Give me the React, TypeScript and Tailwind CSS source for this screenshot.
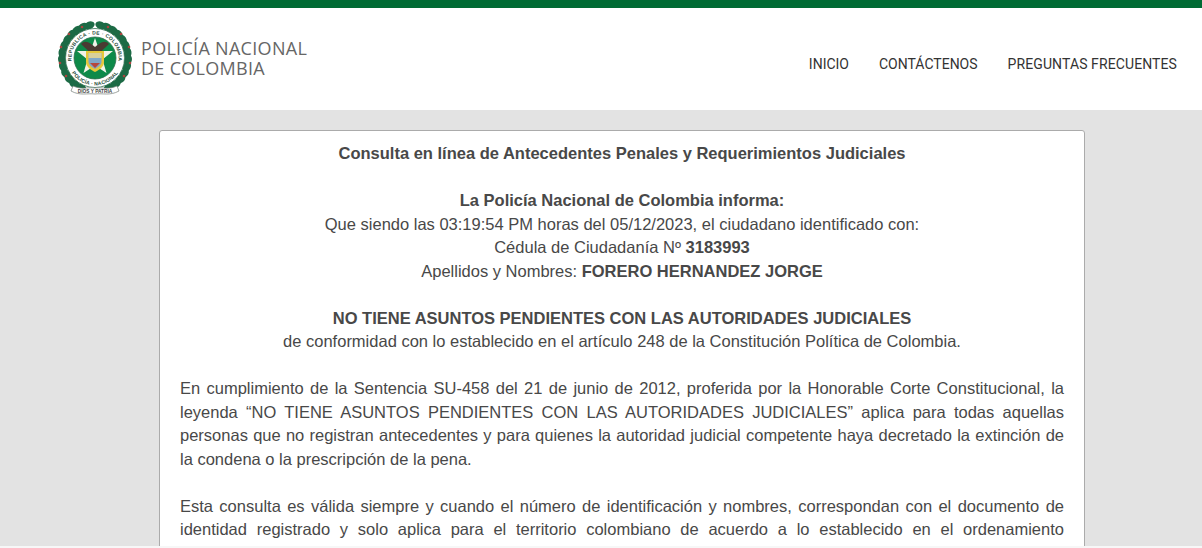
const leafAngles = [-80, -68, -56, -44, -32, -20, -8, 4, 16, 28, 40, 52, 64];

const Leaves = ({ side }: { side: 1 | -1 }) => (
  <g fill="#1c6a45">
    {leafAngles.map((a) => {
      const r = (a * Math.PI) / 180;
      const cx = 38 + side * 33 * Math.cos(r);
      const cy = 38 + 33 * Math.sin(r);
      return (
        <ellipse
          key={a}
          cx={cx}
          cy={cy}
          rx="3.8"
          ry="5.6"
          transform={`rotate(${side * (a + 15)} ${cx} ${cy})`}
        />
      );
    })}
  </g>
);

const Crest = () => (
  <svg width="76" height="76" viewBox="0 0 76 76" className="shrink-0">
    <defs>
      <path id="ringTop" d="M15.9 46 A23.5 23.5 0 1 1 60.1 46" />
      <path id="ringBottom" d="M12.2 47.4 A27.5 27.5 0 0 0 63.8 47.4" />
    </defs>
    <Leaves side={-1} />
    <Leaves side={1} />
    <g fill="#a9443e">
      <circle cx="25" cy="7" r="1.3" /><circle cx="12" cy="14" r="1.3" /><circle cx="4" cy="27" r="1.3" /><circle cx="3" cy="43" r="1.3" /><circle cx="9" cy="56" r="1.3" />
      <circle cx="51" cy="7" r="1.3" /><circle cx="64" cy="14" r="1.3" /><circle cx="72" cy="27" r="1.3" /><circle cx="73" cy="43" r="1.3" /><circle cx="67" cy="56" r="1.3" />
    </g>
    <circle cx="38" cy="38" r="29.5" fill="#fff" stroke="#2d6d4e" strokeWidth="0.8" />
    <circle cx="38" cy="38" r="21" fill="#0d8a49" stroke="#2d6d4e" strokeWidth="0.8" />
    <text fontSize="5" fontWeight="700" fill="#2a4d3c" fontFamily="Liberation Sans, sans-serif" letterSpacing="0.3">
      <textPath href="#ringTop" startOffset="50%" textAnchor="middle">REPÚBLICA · DE · COLOMBIA</textPath>
    </text>
    <text fontSize="5" fontWeight="700" fill="#2a4d3c" fontFamily="Liberation Sans, sans-serif" letterSpacing="0.2">
      <textPath href="#ringBottom" startOffset="50%" textAnchor="middle">POLICÍA · NACIONAL</textPath>
    </text>
    <polygon points="38,18 42.5,31 56,31 45.5,39.5 49.5,53 38,45.5 26.5,53 30.5,39.5 20,31 33.5,31" fill="#f1f2e8" />
    <path d="M24 24 C28 19 34 23 38 27 C42 23 48 19 52 24 C50 26 46 29 44 32 L32 32 C30 29 26 26 24 24 Z" fill="#4a3a32" />
    <path d="M29 31 H47 V42 C47 47 42 50 38 52 C34 50 29 47 29 42 Z" fill="#e6c83a" />
    <path d="M31.5 33 H44.5 V42 C44.5 45 41 47 38 49 C35 47 31.5 45 31.5 42 Z" fill="#7fa7c9" />
    <rect x="31.5" y="33" width="13" height="5" fill="#d9cf9a" />
    <path d="M33 43 H43 L38 48 Z" fill="#b5473f" />
    <path d="M16 66 C25 70 30 67 38 68 C46 67 51 70 60 66 L62 71 C53 76 46 73 38 74 C30 73 23 76 14 71 Z" fill="#fff" stroke="#77807a" strokeWidth="0.7" />
    <text x="38" y="72.6" textAnchor="middle" fontSize="4.8" fontWeight="700" fill="#444" fontFamily="Liberation Sans, sans-serif">DIOS Y PATRIA</text>
  </svg>
);

const Line = ({ children, className = "" }: { children: React.ReactNode; className?: string }) => (
  <p className={`text-center ${className}`}>{children}</p>
);

export default function App() {
  return (
    <div className="flex h-[548px] flex-col overflow-hidden bg-[#e3e3e3] font-['Liberation_Sans',Arial,sans-serif]">
      <div className="h-2 shrink-0 bg-[#006b34]" />
      <header className="flex h-[102px] shrink-0 items-center justify-between bg-white pl-[57px] pr-[25px]">
        <div className="flex items-center gap-[8px] pb-[2px]">
          <Crest />
          <div className="font-['Open_Sans',sans-serif] text-[18px] leading-[20px] tracking-[0.3px] text-[#666666]">
            <div>POLICÍA NACIONAL</div>
            <div>DE COLOMBIA</div>
          </div>
        </div>
        <nav className="flex gap-[30px] pt-[10px] font-['Roboto',sans-serif] text-[14px] text-[#333333]">
          <a>INICIO</a>
          <a>CONTÁCTENOS</a>
          <a className="tracking-[0.1px]">PREGUNTAS FRECUENTES</a>
        </nav>
      </header>
      <main className="min-h-0 flex-1 overflow-hidden pl-[159px] pt-[20px]">
        <section className="h-[500px] w-[926px] rounded-[3px] border border-[#ababab] bg-white px-5 pt-[11px] text-[16.5px] leading-[23.5px] text-[#484848]">
          <Line className="font-bold">Consulta en línea de Antecedentes Penales y Requerimientos Judiciales</Line>
          <Line className="mt-[23.5px] font-bold">La Policía Nacional de Colombia informa:</Line>
          <Line>Que siendo las 03:19:54 PM horas del 05/12/2023, el ciudadano identificado con:</Line>
          <Line>Cédula de Ciudadanía Nº <b>3183993</b></Line>
          <Line>Apellidos y Nombres: <b>FORERO HERNANDEZ JORGE</b></Line>
          <Line className="mt-[23.5px] font-bold">NO TIENE ASUNTOS PENDIENTES CON LAS AUTORIDADES JUDICIALES</Line>
          <Line>de conformidad con lo establecido en el artículo 248 de la Constitución Política de Colombia.</Line>
          <p className="mt-[23.5px] text-justify">
            En cumplimiento de la Sentencia SU-458 del 21 de junio de 2012, proferida por la Honorable Corte Constitucional, la leyenda “NO TIENE ASUNTOS PENDIENTES CON LAS AUTORIDADES JUDICIALES” aplica para todas aquellas personas que no registran antecedentes y para quienes la autoridad judicial competente haya decretado la extinción de la condena o la prescripción de la pena.
          </p>
          <p className="mt-[23.5px] text-justify [text-align-last:justify]">
            Esta consulta es válida siempre y cuando el número de identificación y nombres, correspondan con el documento de identidad registrado y solo aplica para el territorio colombiano de acuerdo a lo establecido en el ordenamiento
          </p>
        </section>
      </main>
      <div className="h-[2px] shrink-0 bg-[#f7f7f7]" />
    </div>
  );
}
